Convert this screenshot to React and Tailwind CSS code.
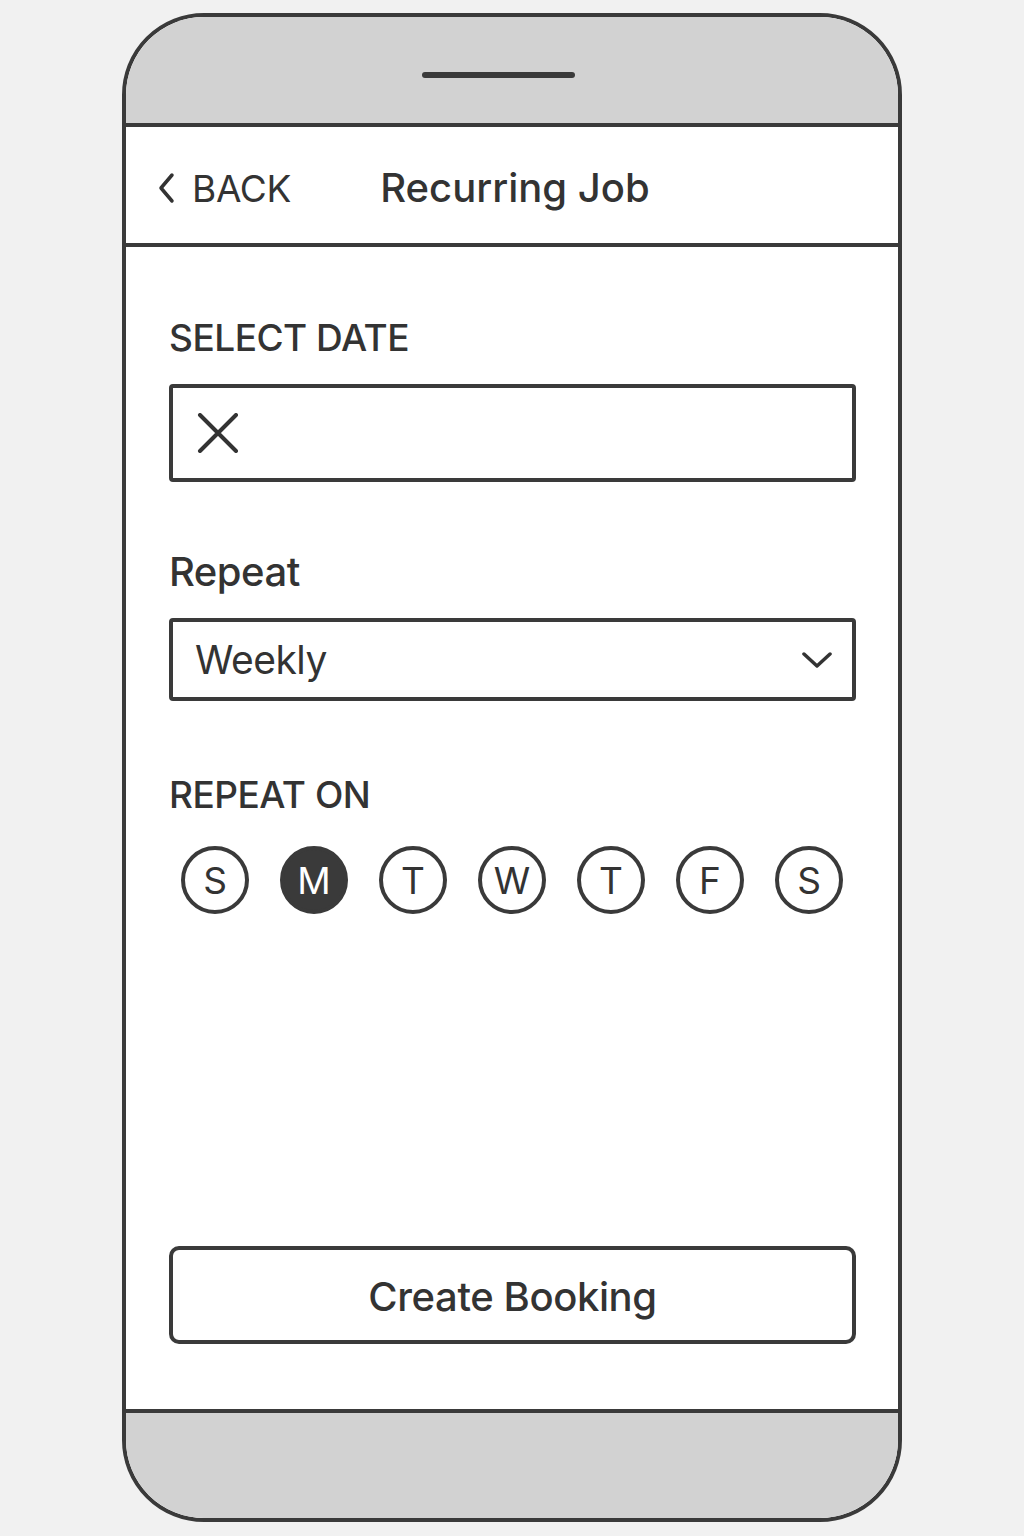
import React from "react";

const font = { fontFamily: "Inter, 'Noto Sans', sans-serif" };

function Day({ l, active }) {
  return (
    <div
      className={
        "w-[68px] h-[68px] rounded-full border-[4px] border-[#3a3a3a] flex items-center justify-center text-[37px] leading-none " +
        (active ? "bg-[#3a3a3a] text-white" : "bg-white text-[#333]")
      }
    >
      {l}
    </div>
  );
}

export default function App() {
  const days = ["S", "M", "T", "W", "T", "F", "S"];
  return (
    <div className="w-[1024px] h-[1536px] bg-[#f1f1f1] pt-[13px] pl-[122px]" style={font}>
      <div className="w-[780px] h-[1509px] rounded-[82px] border-[4px] border-[#3a3a3a] overflow-hidden flex flex-col bg-white text-[#333]">
        <div className="h-[110px] bg-[#d2d2d2] border-b-[4px] border-[#3a3a3a] shrink-0 flex pt-[55px] pl-[296px]">
          <div className="w-[153px] h-[6px] rounded-full bg-[#3a3a3a]" />
        </div>
        <div className="h-[120px] border-b-[4px] border-[#3a3a3a] shrink-0 flex items-center pl-[30px] pt-[6px]">
          <svg width="22" height="34" viewBox="0 0 22 34" className="mr-[14px]">
            <path d="M16 4 L5 17 L16 30" fill="none" stroke="#333" strokeWidth="3.5" strokeLinecap="round" strokeLinejoin="round" />
          </svg>
          <span className="text-[37px] leading-none tracking-[-0.3px]">BACK</span>
          <span className="text-[40px] leading-none font-medium ml-[89px] tracking-[0px]">Recurring Job</span>
        </div>
        <div className="flex-1 flex flex-col pl-[43px] pr-[42px] pt-[72px]">
          <div className="text-[37px] leading-none font-medium tracking-[-0.5px]">SELECT DATE</div>
          <div className="mt-[28px] h-[98px] border-[4px] border-[#3a3a3a] rounded-[4px] flex items-center pl-[24px]">
            <svg width="42" height="40" viewBox="0 0 42 40">
              <path d="M3 2 L39 38 M39 2 L3 38" stroke="#333" strokeWidth="4" strokeLinecap="round" />
            </svg>
          </div>
          <div className="mt-[70px] text-[40px] leading-none font-medium tracking-[-0.5px]">Repeat</div>
          <div className="mt-[26px] h-[83px] border-[4px] border-[#3a3a3a] rounded-[4px] flex items-center justify-between pl-[22px] pr-[20px]">
            <span className="text-[39px] leading-none tracking-[-0.5px]">Weekly</span>
            <svg width="30" height="18" viewBox="0 0 30 18">
              <path d="M2 3 L15 15 L28 3" fill="none" stroke="#333" strokeWidth="3.5" strokeLinecap="round" strokeLinejoin="round" />
            </svg>
          </div>
          <div className="mt-[75px] text-[37px] leading-none font-medium tracking-[-0.5px]">REPEAT ON</div>
          <div className="mt-[33px] flex pl-[12px] gap-[31px]">
            {days.map((d, i) => (
              <Day key={i} l={d} active={i === 1} />
            ))}
          </div>
          <div className="flex-1" />
          <div className="h-[98px] border-[4px] border-[#3a3a3a] rounded-[10px] flex items-center justify-center mb-[65px]">
            <span className="text-[40px] leading-none font-medium tracking-[-0.4px] pt-[3px]">Create Booking</span>
          </div>
        </div>
        <div className="h-[109px] bg-[#d2d2d2] border-t-[4px] border-[#3a3a3a] shrink-0" />
      </div>
    </div>
  );
}
